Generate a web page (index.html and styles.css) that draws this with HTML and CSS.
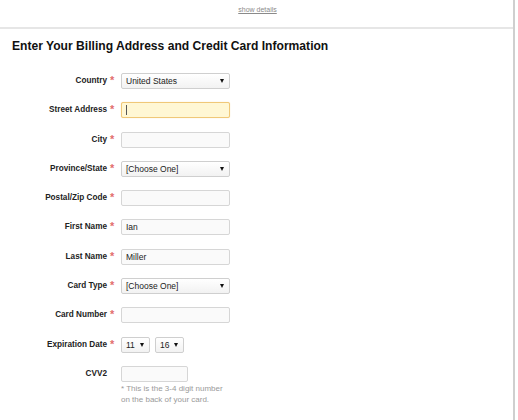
FILE: index.html
```html
<!DOCTYPE html>
<html>
<head>
<meta charset="utf-8">
<link rel="stylesheet" href="styles.css">
</head>
<body>
<div class="page">
  <div class="topbar"><a class="details" href="#">show details</a></div>
  <h1 class="title">Enter Your Billing Address and Credit Card Information</h1>
  <div class="form">
    <div class="row">
      <label class="lbl">Country</label><span class="req">*</span>
      <div class="select wide"><span>United States</span><i class="arrow"></i></div>
    </div>
    <div class="row">
      <label class="lbl">Street Address</label><span class="req">*</span>
      <div class="input focus"><span class="caret"></span></div>
    </div>
    <div class="row">
      <label class="lbl">City</label><span class="req">*</span>
      <div class="input"></div>
    </div>
    <div class="row">
      <label class="lbl">Province/State</label><span class="req">*</span>
      <div class="select wide"><span>[Choose One]</span><i class="arrow"></i></div>
    </div>
    <div class="row">
      <label class="lbl">Postal/Zip Code</label><span class="req">*</span>
      <div class="input"></div>
    </div>
    <div class="row">
      <label class="lbl">First Name</label><span class="req">*</span>
      <div class="input">Ian</div>
    </div>
    <div class="row">
      <label class="lbl">Last Name</label><span class="req">*</span>
      <div class="input">Miller</div>
    </div>
    <div class="row">
      <label class="lbl">Card Type</label><span class="req">*</span>
      <div class="select wide"><span>[Choose One]</span><i class="arrow"></i></div>
    </div>
    <div class="row">
      <label class="lbl">Card Number</label><span class="req">*</span>
      <div class="input"></div>
    </div>
    <div class="row">
      <label class="lbl">Expiration Date</label><span class="req">*</span>
      <div class="pair">
        <div class="select small"><span>11</span><i class="arrow"></i></div>
        <div class="select small"><span>16</span><i class="arrow"></i></div>
      </div>
    </div>
    <div class="row">
      <label class="lbl">CVV2</label><span class="req"></span>
      <div class="field">
        <div class="input short"></div>
        <p class="help">* This is the 3-4 digit number<br>on the back of your card.</p>
      </div>
    </div>
  </div>
</div>
</body>
</html>
```
FILE: styles.css
```css
html, body {
  margin: 0;
  padding: 0;
  background: #ffffff;
}
body {
  font-family: "Liberation Sans", Arial, sans-serif;
  color: #222;
}
.page {
  width: 513px;
  min-height: 420px;
  border-right: 2px solid #cfcfcf;
  box-sizing: content-box;
}
.topbar {
  height: 29px;
  border-bottom: 2px solid #e6e6e6;
  text-align: center;
  box-sizing: border-box;
  padding-top: 5px;
  font-size: 7px;
  line-height: 9px;
}
.details {
  color: #8a8a8a;
  text-decoration: underline;
  position: relative;
  left: 1px;
}
.title {
  margin: 10px 0 0 12px;
  font-size: 12.1px;
  font-weight: bold;
  color: #111;
  line-height: 15px;
}
.form {
  margin-top: 19px;
}
.row {
  display: grid;
  grid-template-columns: 107px 14px auto;
  align-items: start;
  height: 29.3px;
}
.lbl {
  text-align: right;
  font-size: 8.2px;
  font-weight: bold;
  color: #222;
  line-height: 16px;
  white-space: nowrap;
}
.req {
  color: #e26d6d;
  font-size: 11px;
  font-weight: bold;
  line-height: 14px;
  padding-left: 3px;
}
.input, .select {
  height: 16px;
  box-sizing: border-box;
  border: 1px solid #d6d6d6;
  border-radius: 2px;
  font-size: 8.5px;
  line-height: 14px;
  padding-left: 4px;
  color: #222;
  background: #fafafa;
}
.input {
  width: 109px;
}
.input.short {
  width: 67px;
}
.input.focus {
  background: #fff7d4;
  border-color: #f0c878;
  box-shadow: 0 0 1px #f5d89a;
}
.caret {
  display: inline-block;
  width: 1px;
  height: 10px;
  background: #555;
  vertical-align: middle;
  margin-top: -2px;
}
.select {
  display: flex;
  justify-content: space-between;
  align-items: center;
  background: linear-gradient(#ffffff, #f2f2f2);
  border-color: #cfcfcf;
  padding-right: 5px;
}
.select.wide {
  width: 109px;
}
.select.small {
  width: 29px;
}
.pair {
  display: flex;
  gap: 5px;
}
.arrow {
  width: 0;
  height: 0;
  border-left: 2.5px solid transparent;
  border-right: 2.5px solid transparent;
  border-top: 4px solid #111;
}
.help {
  margin: 1px 0 0 0;
  font-size: 8px;
  line-height: 11px;
  color: #9a9a9a;
}
```
